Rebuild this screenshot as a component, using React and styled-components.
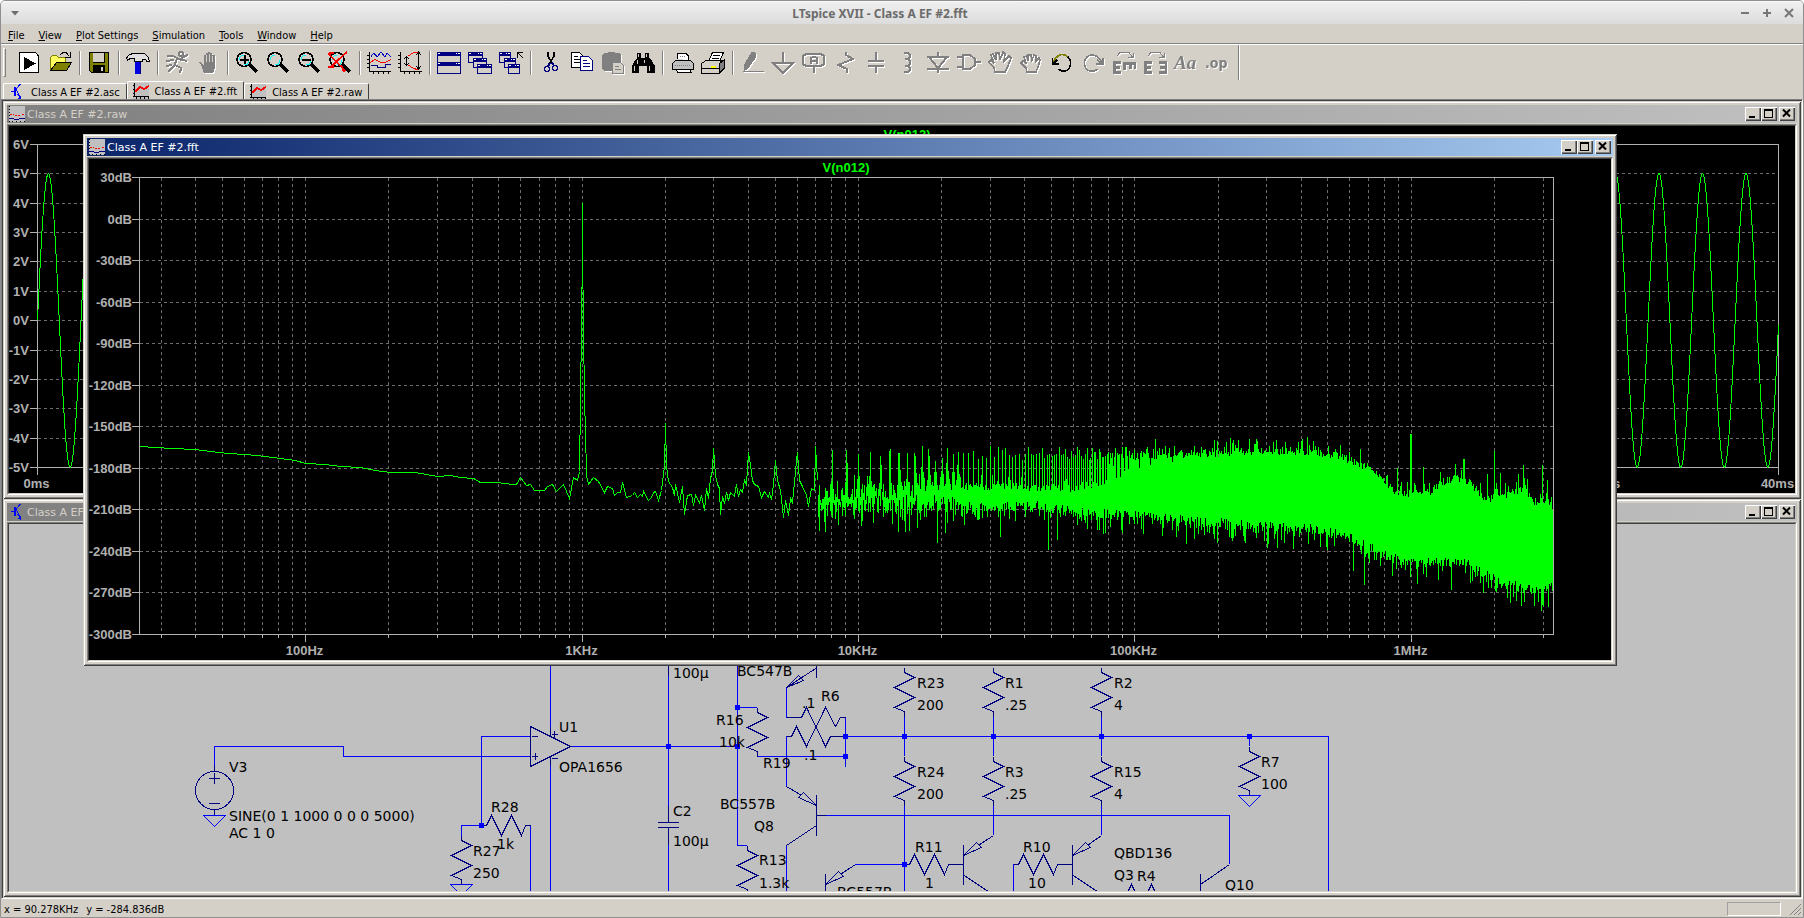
import React from 'react';
import styled, { createGlobalStyle } from 'styled-components';

/* ---------- chart data ---------- */

const makeRandom = (seed) => {
    let s = seed;
    return () => {
        s = (s * 1664525 + 1013904223) % 4294967296;
        return s / 4294967296;
    };
};

const interpolate = (knots, x) => {
    for (let i = 1; i < knots.length; i++) {
        if (x <= knots[i][0]) {
            const [x0, y0] = knots[i - 1];
            const [x1, y1] = knots[i];
            return y0 + ((x - x0) / (x1 - x0)) * (y1 - y0);
        }
    }
    return knots[knots.length - 1][1];
};

const decade = 276.4;
const freqX = (hz) => Math.floor(305.6 + decade * (Math.log10(hz) - 2)) + 0.5;

// low end of the spectrum, where single bins are still visible
const spectrumLine = [
    139, 446, 155, 447, 171, 448, 195, 449, 210, 451, 228, 453, 245, 454, 265, 456, 280, 458, 295, 460, 305, 463,
    325, 464, 340, 466, 360, 467, 375, 470, 390, 472, 415, 472, 437, 476, 450, 475, 460, 477, 473, 478, 480, 482,
    497, 482, 512, 484, 516, 484, 520, 477, 526, 485, 530, 484, 534, 490, 544, 490, 547, 486, 552, 484, 556, 491,
    563, 484, 569, 498, 573, 477, 577, 480, 579, 471, 580, 400, 582, 250, 582, 202, 582, 250, 584, 400, 585, 430,
    586, 475, 588, 484,
    593, 477, 598, 481, 604, 492, 607, 486, 612, 488, 614, 495, 617, 492, 620, 492, 622, 482, 626, 497, 632, 495,
    634, 492, 637, 497, 640, 494, 642, 496, 643, 491, 648, 500, 651, 497, 653, 492, 655, 491, 658, 500, 661, 490,
    664, 465, 665, 423, 666, 465, 668, 481, 672, 487, 674, 495, 675, 484, 679, 502, 682, 486, 684, 514, 687, 495,
    691, 494, 693, 505, 695, 495, 699, 502, 701, 495, 704, 510, 706, 488, 708, 498, 710, 478, 712, 470, 713, 448,
    715, 475, 717, 484, 719, 488, 720, 514, 722, 496, 724, 503, 726, 492, 728, 500, 730, 492, 734, 496, 736, 484,
    738, 496, 740, 489, 742, 492, 744, 480, 746, 484, 748, 452, 750, 464, 752, 480, 754, 484, 758, 486, 761, 497,
    764, 491, 768, 497, 769, 493, 771, 499, 773, 484, 775, 460, 777, 480, 780, 490, 783, 517, 785, 500, 788, 515,
    790, 498, 792, 502, 794, 482, 796, 460, 797, 452, 799, 480, 802, 486, 806, 495, 808, 506, 811, 488, 814, 490,
    815, 446, 817, 480,
];

const topKnots = [
    [818, 496], [860, 492], [900, 490], [940, 487], [1000, 486], [1040, 488], [1070, 488], [1100, 482], [1125, 472],
    [1140, 468], [1155, 466], [1163, 463], [1180, 455], [1210, 453], [1240, 452], [1300, 451], [1340, 456],
    [1360, 464], [1375, 473], [1390, 488], [1400, 494], [1412, 494], [1430, 494], [1440, 483], [1455, 478],
    [1464, 480], [1475, 488], [1484, 498], [1500, 498], [1514, 492], [1525, 489], [1535, 505], [1545, 500], [1554, 508],
];

const bottomKnots = [
    [818, 511], [850, 505], [920, 507], [980, 508], [1040, 507], [1060, 511], [1100, 515], [1130, 515], [1180, 521],
    [1240, 526], [1300, 528], [1340, 535], [1360, 543], [1380, 554], [1400, 562], [1415, 563], [1440, 563],
    [1465, 564], [1480, 573], [1500, 583], [1520, 588], [1540, 591], [1554, 587],
];

const singlePeaks = {
    870: 452, 881: 465, 889: 451, 898: 453, 907: 453, 914: 453, 928: 449, 935: 461,
    1411: 434, 1410: 434, 1423: 467, 1397: 468, 1455: 464, 1463: 459, 1464: 459, 1487: 474, 1494: 451, 1500: 473,
    1518: 474, 1523: 465, 1542: 465, 1547: 480, 1155: 439, 1217: 441, 1328: 446,
};

const singleDips = {
    819: 531, 825: 532, 838: 525, 861: 526, 892: 524, 898: 532, 905: 532, 909: 531, 937: 543, 945: 533, 1000: 537,
    1048: 550, 1057: 540, 1122: 533, 1186: 544, 1232: 541, 1267: 548, 1277: 548, 1293: 549, 1353: 571, 1364: 585,
    1417: 584, 1451: 590, 1510: 603, 1524: 602, 1541: 611, 1548: 607,
};

const buildNoise = () => {
    const random = makeRandom(77);
    const harmonics = {};
    for (let n = 8; n < 150; n++) {
        const x = Math.round(582 + decade * Math.log10(n));
        harmonics[x] = 446 + random() * 14;
    }
    let path = '';
    for (let x = 818; x < 1554; x++) {
        const sparse = x < 930;
        let top = interpolate(topKnots, x) + (random() - 0.5) * (sparse ? 18 : 8);
        let bottom = interpolate(bottomKnots, x) + (random() - 0.6) * (sparse ? 18 : 10);
        if (random() > 0.75) top -= random() * 12;
        if (random() > 0.62) bottom += random() * 17;
        if (x < 1170 && harmonics[x]) top = Math.min(top, harmonics[x]);
        else if (x < 960 && (harmonics[x + 1] || harmonics[x - 1])) {
            top -= 14;
            bottom -= 8;
        }
        if (singlePeaks[x]) top = singlePeaks[x];
        if (singleDips[x]) bottom = singleDips[x];
        path += `M${x + 0.5} ${Math.round(top)}V${Math.round(Math.max(bottom, top + 5))}`;
    }
    return path;
};

const noisePath = buildNoise();

const buildSine = () => {
    let path = '';
    for (let i = 0; i <= 1741 * 2; i++) {
        const x = i / 2;
        const y = 320.5 - 146.8 * Math.sin((x / 43.53) * 2 * Math.PI);
        path += `${i ? 'L' : 'M'}${37.5 + x} ${y.toFixed(1)}`;
    }
    return path;
};

const sinePath = buildSine();

const fftRows = [30, 0, -30, -60, -90, -120, -150, -180, -210, -240, -270, -300].map((db, i) => ({
    label: `${db}dB`,
    y: Math.round(177 + (i * 457) / 11) + 0.5,
}));

const fftColumns = [];
[10, 100, 1000, 10000, 100000, 1000000].forEach((base) => {
    for (let m = 1; m < 10; m++) {
        const hz = base * m;
        if (hz > 25 && hz < 3260000) fftColumns.push({ x: freqX(hz), major: m === 1 });
    }
});

const fftLabels = [
    { hz: 100, label: '100Hz' },
    { hz: 1000, label: '1KHz' },
    { hz: 10000, label: '10KHz' },
    { hz: 100000, label: '100KHz' },
    { hz: 1000000, label: '1MHz' },
];

const voltRows = [6, 5, 4, 3, 2, 1, 0, -1, -2, -3, -4, -5].map((v, i) => ({
    label: `${v}V`,
    y: Math.round(144 + (i * 323) / 11) + 0.5,
}));

const timeColumns = [0, 4, 8, 12, 16, 20, 24, 28, 32, 36, 40].map((ms) => ({
    label: `${ms}ms`,
    x: Math.round(37 + (ms * 1741) / 40) + 0.5,
}));

/* ---------- plots ---------- */

function FftPlot() {
    return (
        <PlotSvg width="1522" height="501" viewBox="89 159 1522 501" role="img" aria-label="FFT of V(n012)">
            <GridLines>
                {fftRows.slice(1, -1).map((row) => <path key={row.label} d={`M140 ${row.y}H1553`} />)}
                {fftColumns.map((col) => <path key={col.x} d={`M${col.x} 178V634`} />)}
            </GridLines>
            <Trace points={spectrumLine.map((v) => v + 0.5).join(' ')} />
            <NoiseTrace d={noisePath} />
            <AxisLines>
                <path d="M139.5 177V635M1553.5 177V635M139 177.5H1554M139 634.5H1554" />
                {fftRows.map((row) => <path key={row.label} d={`M132 ${row.y}H139`} />)}
                {fftColumns.map((col) => <path key={col.x} d={`M${col.x} 634V${col.major ? 642 : 638}`} />)}
            </AxisLines>
            {fftRows.map((row) => <AxisText key={row.label} x="132" y={row.y + 4.5} textAnchor="end">{row.label}</AxisText>)}
            {fftLabels.map((item) => <AxisText key={item.label} x={freqX(item.hz) - 1} y="655" textAnchor="middle">{item.label}</AxisText>)}
            <TraceText x="846" y="172" textAnchor="middle">V(n012)</TraceText>
        </PlotSvg>
    );
}

function RawPlot() {
    return (
        <PlotSvg width="1786" height="367" viewBox="9 126 1786 367" role="img" aria-label="Waveform of V(n012)">
            <GridLines>
                {voltRows.slice(1, -1).map((row) => <path key={row.label} d={`M38 ${row.y}H1778`} />)}
                {timeColumns.slice(1, -1).map((col) => <path key={col.label} d={`M${col.x} 145V467`} />)}
            </GridLines>
            <AxisLines>
                <path d="M37.5 144V475M1778.5 144V475M37 144.5H1779M37 467.5H1779" />
                {voltRows.map((row) => <path key={row.label} d={`M30 ${row.y}H37`} />)}
            </AxisLines>
            <SineTrace d={sinePath} />
            {voltRows.map((row) => <AxisText key={row.label} x="29" y={row.y + 4.5} textAnchor="end">{row.label}</AxisText>)}
            {timeColumns.map((col) => <AxisText key={col.label} x={col.x - 1} y="488" textAnchor="middle">{col.label}</AxisText>)}
            <TraceText x="907" y="139" textAnchor="middle">V(n012)</TraceText>
        </PlotSvg>
    );
}

/* ---------- schematic ---------- */

const ResistorV = ({ x, y }) => (
    <Part d={`M${x} ${y}v5l10 5l-20 10l20 10l-20 10l10 4v5`} />
);

const ResistorH = ({ x, y }) => (
    <Part d={`M${x} ${y}h5l5 -10l10 20l10 -20l10 20l4 -10h5`} />
);

const Ground = ({ x, y }) => <Wire d={`M${x - 11} ${y}h22l-11 11z`} />;

const wires = [
    'M214.5 767V746.5H343.5V756.5H530',
    'M530 736.5H481.5V825.5H461.5V840',
    'M530.5 825V891',
    'M550.5 666V727M550.5 766V891',
    'M570 746.5H737',
    'M668.5 676V806M668.5 845V891',
    'M737.5 666V845.5H747',
    'M737 707.5H756.5',
    'M756.5 756.5H845.5M845.5 717V767',
    'M786.5 687V717.5M786.5 736V787M786.5 845V891',
    'M845.5 736.5H1328.5V891',
    'M825 815.5H1229.5V864',
    'M855 864.5H904.5',
    'M904.5 717V756M904.5 805V891',
    'M993.5 717V756M993.5 805V835',
    'M1101.5 717V756M1101.5 805V835',
    'M1249.5 736V746',
    'M1018 864.5H1013.5V891',
];

const parts = [
    'M214.5 766V771M214.5 809V815M209 778.5H220M214.5 773V784M209 803.5H220',
    'M530.5 726.5V766.5L570.5 746.5Z',
    'M550.5 727V736M550.5 757V766',
    'M532 736.5H538M532 756.5H538M535.5 753V760M552 734.5H558M554.5 731V738M552 758.5H558',
    'M668.5 666V676M668.5 806V822M658 822.5H679M658 827.5H679M668.5 827V845',
    'M816.5 666V678M816.5 668L786.5 687.5L798.5 675.5L803.5 680.5L786.5 687.5',
    'M786.5 786.5L801 795M816.5 805.5L798.5 797.5L803.5 792.5ZM816.5 795V836M816 815.5H826M816.5 825.5L786.5 845.5',
    'M825.5 874V891M855.5 864.5L841 874M825.5 884.5L838.5 871.5L843.5 876.5Z',
    'M949 864.5H963M963.5 845V885M993.5 835.5L979 845M963.5 855.5L976.5 842.5L981.5 847.5ZM963.5 875L989 892',
    'M1062 864.5H1072M1072.5 845V885M1101.5 835.5L1088 845M1072.5 855.5L1085.5 842.5L1090.5 847.5ZM1072.5 875L1098 892',
    'M1200.5 874V891M1229.5 864.5L1200.5 884.5',
    'M786.5 717.5H801.5L806.5 707.5L825.5 746.5L830.5 736.5H846',
    'M786.5 736.5H791.5L796.5 726.5L806.5 746.5L825.5 707.5L835.5 726.5L840.5 717.5H846',
];

const nodes = [
    [481, 825], [668, 746], [737, 746], [737, 707], [845, 736], [845, 756],
    [904, 736], [904, 864], [993, 736], [1101, 736], [1249, 736],
];

const labels = [
    [229, 772, 'V3'], [229, 821, 'SINE(0 1 1000 0 0 0 5000)'], [229, 838, 'AC 1 0'],
    [491, 812, 'R28'], [497, 849, '1k'], [473, 856, 'R27'], [473, 878, '250'],
    [559, 732, 'U1'], [559, 772, 'OPA1656'], [673, 678, '100µ'], [673, 816, 'C2'], [673, 846, '100µ'],
    [716, 725, 'R16'], [719, 747, '10k'], [763, 768, 'R19'], [737, 676, 'BC547B'], [720, 809, 'BC557B'],
    [754, 831, 'Q8'], [759, 865, 'R13'], [759, 888, '1.3k'], [821, 701, 'R6'], [802, 708, '.1'], [804, 760, '.1'],
    [917, 688, 'R23'], [917, 710, '200'], [917, 777, 'R24'], [917, 799, '200'],
    [1005, 688, 'R1'], [1005, 710, '.25'], [1005, 777, 'R3'], [1005, 799, '.25'],
    [1114, 688, 'R2'], [1114, 710, '4'], [1114, 777, 'R15'], [1114, 799, '4'],
    [1261, 767, 'R7'], [1261, 789, '100'], [915, 852, 'R11'], [925, 888, '1'], [1023, 852, 'R10'], [1028, 888, '10'],
    [1114, 858, 'QBD136'], [1114, 880, 'Q3'], [1137, 881, 'R4'], [1225, 890, 'Q10'], [837, 897, 'BC557B'],
];

function Schematic() {
    return (
        <SchematicSvg width="1786" height="367" viewBox="9 524 1786 367" role="img" aria-label="Class A EF #2 schematic">
            {wires.map((d) => <Wire key={d} d={d} />)}
            {parts.map((d) => <Part key={d} d={d} />)}
            <PartCircle cx="214.5" cy="790.5" r="19" />
            <Ground x={214.5} y={815.5} />
            <Ground x={461.5} y={884.5} />
            <Ground x={1249.5} y={795.5} />
            <ResistorV x={461.5} y={835.5} />
            <ResistorV x={747.5} y={845.5} />
            <ResistorV x={757.5} y={707.5} />
            <ResistorV x={904.5} y={667.5} />
            <ResistorV x={904.5} y={756.5} />
            <ResistorV x={993.5} y={667.5} />
            <ResistorV x={993.5} y={756.5} />
            <ResistorV x={1101.5} y={667.5} />
            <ResistorV x={1101.5} y={756.5} />
            <ResistorV x={1249.5} y={746.5} />
            <ResistorH x={481.5} y={825.5} />
            <ResistorH x={904.5} y={864.5} />
            <ResistorH x={1013.5} y={864.5} />
            <ResistorH x={1121.5} y={894.5} />
            {nodes.map(([x, y]) => <NodeDot key={`${x}-${y}`} x={x - 2} y={y - 2} width="5" height="5" />)}
            {labels.map(([x, y, text]) => <PartText key={`${x}-${y}`} x={x} y={y}>{text}</PartText>)}
        </SchematicSvg>
    );
}

/* ---------- toolbar icons ---------- */

const magnifier = (
    <>
        <path d="M14 13L22 21" stroke="#000" strokeWidth="4" />
        <circle cx="9" cy="8.500" r="7" fill="#d4d0c8" stroke="#000" strokeWidth="1.600" />
        <path d="M4 9C4 6 6 4 9 4M9 14C12 14 14 12 14 9" stroke="#0ff" fill="none" />
    </>
);

const miniWindow = (x, y, w, h) => (
    <>
        <rect x={x + 0.5} y={y + 0.5} width={w - 1} height={h - 1} fill="#d4d0c8" stroke="#000080" />
        <rect x={x} y={y} width={w} height="4" fill="#000080" />
        <path d={`M${x + 1} ${y + 1.5}h2M${x + w - 5} ${y + 1.5}h1M${x + w - 3} ${y + 1.5}h2`} stroke="#fff" />
    </>
);

const icons = {
    run: (
        <>
            <path d="M2.500 1.500H18.500L21.500 5V21.500H2.500Z" fill="#fff" stroke="#000" />
            <path d="M7 6V19L19 12.500Z" fill="#000" />
        </>
    ),
    open: (
        <>
            <path d="M2.500 19.500V6.500L4.500 4.500H8.500L10.500 6.500H17.500V12H8Z" fill="#ffff60" stroke="#808000" />
            <path d="M2.500 19.500L8.500 11.500H23.500L18.500 19.500Z" fill="#808000" stroke="#000" />
            <path d="M12.500 3.500L15 1.500H18L21.500 5.500M22.500 1V6.500H17" stroke="#000" fill="none" />
        </>
    ),
    save: (
        <>
            <path d="M2 1H22V22H4L2 20Z" fill="#000" />
            <path d="M3 2H6V12H18V2H21V21H18V14H6V21H4L3 20Z" fill="#808000" />
            <path d="M6 2H17V11H6Z" fill="#d4d0c8" />
            <path d="M14 16H16V20H14Z" fill="#d4d0c8" />
        </>
    ),
    hammer: (
        <>
            <path d="M9 11H15V23H9Z" fill="#0000e0" />
            <path d="M14.500 11V23" stroke="#000080" />
            <path d="M.5 7L3 4L8 2H18L20 4L22 6L23.500 10.500H21L19 8H16V10.500H8V7H5L1.500 9.500Z" fill="#e0e0e0" stroke="#000" />
        </>
    ),
    halt: <path d="M14 3a2 2 0 1 0 4 0a2 2 0 1 0-4 0M2 5H8L14 8L22 10M12 8L9 15L3 21M10 14L16 17L15 22M15 9L20 5L23 4M1 10L9 9M1 15L7 14" stroke="#808080" strokeWidth="2" fill="none" />,
    hand: (
        <>
            <path d="M5 14L2 11H5L8 15V4H10V2H12V1H14V2H16V4H19V17L17 22H8Z" fill="#808080" />
            <path d="M10.500 4V11M13.500 3V11M16.500 5V11" stroke="#d4d0c8" />
        </>
    ),
    zoomIn: <>{magnifier}<path d="M5 8.500H14M9.500 4V13" stroke="#000" strokeWidth="2" /></>,
    zoom: magnifier,
    zoomOut: <>{magnifier}<path d="M5 8.500H14" stroke="#000" strokeWidth="2" /></>,
    zoomFit: <>{magnifier}<path d="M0 2L17 20M19 1L10 9L2 17M0 16H6M13 14L16 21M1 2H6" stroke="#f00" strokeWidth="1.600" fill="none" /></>,
    plot: (
        <>
            <path d="M2.500 1V20.500H24M0 4.500H2M0 8.500H2M0 12.500H2M0 16.500H2M6.500 20V23M11.500 20V23M16.500 20V23M21.500 20V23" stroke="#000" fill="none" />
            <path d="M4 5.500L7 2L10 6L14 1L18 6L20 2L24 6" stroke="#0000c0" fill="none" />
            <path d="M3 11.500L8 8.500L14 11.500H18L24 8.500" stroke="#f00" fill="none" />
            <path d="M4 14.500H10V16.500H18V13.500H24" stroke="#000080" fill="none" />
        </>
    ),
    autorange: (
        <>
            <path d="M2.500 1V20.500H24M0 4.500H2M0 8.500H2M0 12.500H2M0 16.500H2M6.500 20V23M11.500 20V23M16.500 20V23M21.500 20V23" stroke="#000" fill="none" />
            <path d="M20.500 1V18M18 4L20.500 1L23 4M18 15L20.500 18L23 15M8.500 6V14M6 8L8.500 6L11 8M6 12L8.500 14L11 12" stroke="#000" fill="none" />
            <path d="M10 5L15 2L20 1M10 14L15 17L20 19" stroke="#f00" fill="none" />
        </>
    ),
    tile: <>{miniWindow(0, 1, 24, 11)}{miniWindow(0, 11, 24, 12)}</>,
    cascade: <>{miniWindow(0, 1, 15, 11)}{miniWindow(5, 7, 14, 10)}{miniWindow(9, 13, 15, 10)}</>,
    closeAll: <>{miniWindow(0, 1, 12, 11)}{miniWindow(5, 7, 12, 10)}{miniWindow(9, 13, 12, 10)}<path d="M18.500 7V1.500H24M19 2L24 7" stroke="#000" fill="none" /></>,
    cut: (
        <>
            <path d="M10 1V5L14 12M16 1V5L12 12" stroke="#000" strokeWidth="1.600" fill="none" />
            <path d="M12 12L10 15M14 12L16 14" stroke="#000080" strokeWidth="2" />
            <circle cx="9" cy="18" r="2.500" fill="none" stroke="#000080" strokeWidth="1.600" />
            <circle cx="17" cy="17" r="2.500" fill="none" stroke="#000080" strokeWidth="1.600" />
        </>
    ),
    copy: (
        <>
            <path d="M2.500 1.500H10.500L14.500 5.500V16.500H2.500Z" fill="#fff" stroke="#000" />
            <path d="M5 5.500H9M5 8.500H11M5 11.500H11" stroke="#000" />
            <path d="M11.500 5.500H19.500L23.500 9.500V19.500H11.500Z" fill="#fff" stroke="#000080" />
            <path d="M14 9.500H18M14 12.500H21M14 15.500H21" stroke="#000080" />
        </>
    ),
    paste: (
        <>
            <path d="M2 4L4 2H8V1H15V2H19L21 4V20H4L2 18Z" fill="#808080" />
            <path d="M12.500 11.500H20.500L23.500 14.500V22.500H12.500Z" fill="#d4d0c8" stroke="#808080" />
            <path d="M15 15.500H19M15 18.500H21" stroke="#808080" />
        </>
    ),
    find: (
        <>
            <path d="M6 2H10V7H14V2H18V7L21 10L24 15V22H16V15H8V22H1V15L4 9L6 7Z" fill="#000" />
            <path d="M7.500 3V6M15.500 3V6M6.500 9V13M3.500 15V20M18.500 15V20M13.500 9V12" stroke="#d4d0c8" />
        </>
    ),
    print: (
        <>
            <path d="M7.500 8V2.500H16L18.500 5V9" fill="#fff" stroke="#000" />
            <path d="M5.500 9.500H20.500L23.500 12.500V18.500H2.500V12.500Z" fill="#c0c0c0" stroke="#000" />
            <path d="M6.500 18.500H19.500L21.500 21.500H7.500Z" fill="#fff" stroke="#000" />
            <path d="M10 5.500H15M5 14.500H21" stroke="#808080" strokeDasharray="1 1" />
        </>
    ),
    printSetup: (
        <>
            <path d="M7.500 10L11.500 1.500H22.500L18.500 10" fill="#fff" stroke="#000" />
            <path d="M12 4.500H19M11 7.500H18" stroke="#000" />
            <path d="M18.500 12.500L23.500 8.500V17L18.500 22" fill="#808080" stroke="#000" />
            <path d="M.5 12.500L5 9.500H21L18.500 12.500V22.500H.5Z" fill="#d4d0c8" stroke="#000" />
            <path d="M1 17.500H18" stroke="#000" />
            <path d="M10 15.500H15" stroke="#ff0" strokeWidth="2" />
        </>
    ),
    pencil: <path d="M12 1L15 2V7L8 17L4 20L5 13ZM4 20.500H24" fill="#808080" stroke="#808080" />,
    ground: <path d="M11.500 1V11M1 11.500H23L12 22Z" stroke="#808080" strokeWidth="2" fill="none" />,
    label: <path d="M4 3H19L22 5V13L19 15H4L1 13V5ZM9 13V7L11 6H13L15 7V13M9 10H15M12 15V22" stroke="#808080" strokeWidth="2" fill="none" />,
    resistor: <path d="M13 1V4L20 8L5 14L14 18V22" stroke="#808080" strokeWidth="2" fill="none" />,
    capacitor: <path d="M12 1V9M4 10H20M4 15H20M12 15V22" stroke="#808080" strokeWidth="2" fill="none" />,
    inductor: <path d="M9 2H13L15 4V6L13 8H10M13 8L15 10V13L13 15H10M13 15L15 17V19L13 21H9" stroke="#808080" strokeWidth="2" fill="none" />,
    diode: <path d="M12 1V6M1 6H23M3 6L12 17L21 6M1 18H23M12 18V22" stroke="#808080" strokeWidth="2" fill="none" />,
    gate: <path d="M0 6H5M0 16H5M6 4H13L18 8V14L13 18H6ZM18 11H24" stroke="#808080" strokeWidth="2" fill="none" />,
    move: <path d="M7 21L6 17L1 11L3 9L6 12L3 4L5 3L8 9V2H11L12 9L15 1L17 3L16 10L21 5L23 7L20 15L17 21Z" stroke="#808080" strokeWidth="1.600" fill="none" />,
    drag: <path d="M8 21L7 17L2 12L4 10L7 12L5 6L8 5L9 10V4H12L13 9L15 4L17 5V10L20 7L21 9L19 16L17 21Z" stroke="#808080" strokeWidth="1.600" fill="none" />,
    undo: (
        <>
            <path d="M3 12C6 4 13 1 18 6" stroke="#808000" strokeWidth="1.600" fill="none" />
            <path d="M18 6C23 11 20 19 15 20C12 20.500 10 20 9 18M2.500 7V13H9M3 13L7 9" stroke="#000" strokeWidth="1.600" fill="none" />
        </>
    ),
    redo: <path d="M21 13C19 4 10 2 6 6C1 11 4 19 9 20C12 20.500 15 20 16 18M22 7V13H15M20 12L16 9" stroke="#808080" strokeWidth="1.600" fill="none" />,
    rotate: (
        <>
            <path d="M9 11H2V21H9M2 16H8M12 19V12H24M18 12V18M23 12V18" stroke="#808080" strokeWidth="3" fill="none" />
            <path d="M4.500 5.500L8 1.500H17L20.500 6M16 6.500H21.500V2" stroke="#808080" fill="none" />
        </>
    ),
    mirror: (
        <>
            <path d="M9 11H2V21H9M2 16H8M16 11H23V21H16M17 16H23" stroke="#808080" strokeWidth="3" fill="none" />
            <path d="M4.500 5.500L8 1.500H17L20.500 6M16 6.500H21.500V2" stroke="#808080" fill="none" />
        </>
    ),
};

const toolGroups = [
    [['run', 'Run'], ['open', 'Open']],
    [['save', 'Save']],
    [['hammer', 'Control Panel']],
    [['halt', 'Run simulation', true], ['hand', 'Halt', true]],
    [['zoomIn', 'Zoom in'], ['zoom', 'Pan'], ['zoomOut', 'Zoom out'], ['zoomFit', 'Zoom full extents']],
    [['plot', 'Pick visible traces'], ['autorange', 'Autorange']],
    [['tile', 'Tile windows'], ['cascade', 'Cascade windows'], ['closeAll', 'Close windows']],
    [['cut', 'Cut'], ['copy', 'Copy'], ['paste', 'Paste', true], ['find', 'Find']],
    [['print', 'Print'], ['printSetup', 'Print setup']],
    [
        ['pencil', 'Wire', true], ['ground', 'Ground', true], ['label', 'Label net', true], ['resistor', 'Resistor', true],
        ['capacitor', 'Capacitor', true], ['inductor', 'Inductor', true], ['diode', 'Diode', true],
        ['gate', 'Component', true], ['move', 'Move', true], ['drag', 'Drag', true], ['undo', 'Undo'],
        ['redo', 'Redo', true], ['rotate', 'Rotate', true], ['mirror', 'Mirror', true], ['text', 'Text', true],
        ['directive', 'SPICE directive', true],
    ],
];

const menuItems = ['File', 'View', 'Plot Settings', 'Simulation', 'Tools', 'Window', 'Help'];

const SchematicIcon = () => (
    <svg width="16" height="16" shapeRendering="crispEdges">
        <path d="M2 7.500H6M11.500 0L7 5L12 15.500M8 10L12 14" stroke="#00f" fill="none" />
        <path d="M6 3V12" stroke="#00f" strokeWidth="2" />
        <path d="M12 15V11L8 15Z" fill="#00f" />
    </svg>
);

const WaveIcon = () => (
    <svg width="16" height="16" shapeRendering="crispEdges">
        <rect width="16" height="16" fill="#c0c0c0" />
        <path d="M1.500 0V13M0 2.500H2M0 6.500H2M0 10.500H2" stroke="#000" />
        <path d="M0 13.500H16M3.500 13V16M7.500 13V16M11.500 13V16M15.500 13V16" stroke="#000" />
        <path d="M2 9L7 4L11 6L16 3" stroke="#f00" strokeWidth="2" fill="none" />
    </svg>
);

const CaptionIcon = () => (
    <svg width="16" height="16" shapeRendering="crispEdges">
        <rect width="16" height="16" fill="#c0c0c0" />
        <path d="M.5 0V16" stroke="#000" strokeDasharray="1 2" />
        <path d="M1 8.500H5M6 9.500H12M13 8.500H16" stroke="#f00" strokeDasharray="2 1" />
        <path d="M0 12.500H5M5 13.500H10M10 12.500H16" stroke="#000080" />
        <path d="M3 15.500H16" stroke="#000" strokeDasharray="1 3" />
    </svg>
);

/* ---------- windows ---------- */

function MdiWindow({ title, icon, active, dark, children }) {
    return (
        <Frame>
            <Caption $active={active}>
                {icon}
                <CaptionText $active={active}>{title}</CaptionText>
                <CaptionButton aria-label="Minimize">
                    <svg width="12" height="10" shapeRendering="crispEdges"><path d="M3 9H9" stroke="#000" strokeWidth="2" /></svg>
                </CaptionButton>
                <CaptionButton aria-label="Maximize">
                    <svg width="12" height="10" shapeRendering="crispEdges"><path d="M2.500 1.500H10.500V9.500H2.500ZM2 2.500H11" stroke="#000" fill="none" /></svg>
                </CaptionButton>
                <CloseButton aria-label="Close">
                    <svg width="12" height="10"><path d="M3 1.500L10 8.500M10 1.500L3 8.500" stroke="#000" strokeWidth="2" /></svg>
                </CloseButton>
            </Caption>
            <Client $dark={dark}>{children}</Client>
        </Frame>
    );
}

function Tool({ name, title, disabled }) {
    return (
        <ToolButton title={title} aria-label={title} disabled={disabled}>
            {name === 'text' && <ToolScript>Aa</ToolScript>}
            {name === 'directive' && <ToolMono>.op</ToolMono>}
            {icons[name] && <ToolIcon viewBox="0 0 24 24">{icons[name]}</ToolIcon>}
        </ToolButton>
    );
}

export default function App() {
    return (
        <Shell>
            <GlobalStyle />
            <TitleBar>
                <TitleButton aria-label="Window menu">
                    <svg width="10" height="6"><path d="M1 1H9L5 5.500Z" fill="#6e6e6e" /></svg>
                </TitleButton>
                <TitleText>LTspice XVII - Class A EF #2.fft</TitleText>
                <TitleButton aria-label="Minimize">
                    <svg width="10" height="10"><path d="M1 5H9" stroke="#777" strokeWidth="2" /></svg>
                </TitleButton>
                <TitleButton aria-label="Maximize">
                    <svg width="10" height="10"><path d="M1 5H9M5 1V9" stroke="#777" strokeWidth="2" /></svg>
                </TitleButton>
                <TitleButton aria-label="Close">
                    <svg width="10" height="10"><path d="M1 1L9 9M9 1L1 9" stroke="#777" strokeWidth="2" /></svg>
                </TitleButton>
            </TitleBar>
            <MenuBar>
                {menuItems.map((item) => (
                    <MenuButton key={item}><u>{item[0]}</u>{item.slice(1)}</MenuButton>
                ))}
            </MenuBar>
            <Toolbar>
                <Grip />
                {toolGroups.map((group, i) => (
                    <React.Fragment key={group[0][0]}>
                        {i > 0 && <Separator />}
                        {group.map(([name, title, disabled]) => (
                            <Tool key={name} name={name} title={title} disabled={disabled} />
                        ))}
                    </React.Fragment>
                ))}
                <ToolbarEnd />
            </Toolbar>
            <Tabs>
                <Tab><SchematicIcon />Class A EF #2.asc</Tab>
                <Tab $active><WaveIcon />Class A EF #2.fft</Tab>
                <Tab><WaveIcon />Class A EF #2.raw</Tab>
            </Tabs>
            <Desktop>
                <MdiWindow title="Class A EF #2.raw" icon={<CaptionIcon />} dark><RawPlot /></MdiWindow>
                <MdiWindow title="Class A EF #2.asc" icon={<SchematicIcon />}><Schematic /></MdiWindow>
                <Floating>
                    <MdiWindow title="Class A EF #2.fft" icon={<CaptionIcon />} active dark><FftPlot /></MdiWindow>
                </Floating>
            </Desktop>
            <StatusBar>
                <span>x = 90.278KHz</span>
                <span>y = -284.836dB</span>
                <StatusPane />
                <svg width="12" height="12"><path d="M1 12L12 1M5 12L12 5M9 12L12 9" stroke="#808080" /></svg>
            </StatusBar>
        </Shell>
    );
}

/* ---------- styles ---------- */

const GlobalStyle = createGlobalStyle`
    * {
        box-sizing: border-box;
    }
    body {
        margin: 0;
        background: #fff;
        font-family: "DejaVu Sans Condensed", "DejaVu Sans", sans-serif;
        font-size: 11px;
        color: #000;
    }
    button {
        margin: 0;
        padding: 0;
        border: 0;
        background: none;
        color: inherit;
        font: inherit;
    }
    svg {
        display: block;
        flex: none;
    }
`;

const Shell = styled.div`
    display: flex;
    flex-direction: column;
    min-height: 100vh;
    border: 1px solid #8f8f8f;
    border-radius: 5px 5px 0 0;
    background: #d4d0c8;
    overflow: hidden;
`;

const TitleBar = styled.header`
    display: flex;
    align-items: center;
    height: 23px;
    padding: 0 3px;
    border-top: 1px solid #fafafa;
    background: linear-gradient(#efefef, #dcdcdc);
`;

const TitleButton = styled.button`
    display: flex;
    align-items: center;
    justify-content: center;
    width: 22px;
    height: 20px;
`;

const TitleText = styled.h1`
    flex: 1;
    margin: 0;
    padding-top: 2px;
    font: bold 12px/20px "Noto Sans", sans-serif;
    text-align: center;
    color: #6b6b6b;
`;

const MenuBar = styled.nav`
    display: flex;
    gap: 14px;
    height: 21px;
    padding-left: 7px;
    border-bottom: 1px solid #fff;
    box-shadow: inset 0 -1px #808080;
`;

const MenuButton = styled.button`
    height: 21px;
    padding-top: 2px;
    line-height: 19px;
`;

const Toolbar = styled.div`
    display: flex;
    align-items: center;
    height: 35px;
    padding-left: 2px;
`;

const Grip = styled.span`
    width: 3px;
    height: 29px;
    margin-right: 8px;
    border: 1px solid #808080;
    border-top-color: #fff;
    border-left-color: #fff;
`;

const ToolButton = styled.button`
    display: flex;
    align-items: center;
    width: 31px;
    height: 30px;
    padding-left: 3px;
    color: #808080;

    &:disabled {
        filter: drop-shadow(1px 1px 0 #fff);
    }
`;

const ToolIcon = styled.svg`
    width: 24px;
    height: 24px;
    shape-rendering: crispEdges;
`;

const ToolScript = styled.span`
    font: italic bold 19px/24px "Liberation Serif", serif;
`;

const ToolMono = styled.span`
    font: bold 14px/24px "DejaVu Sans Condensed", sans-serif;
`;

const Separator = styled.span`
    width: 2px;
    height: 24px;
    margin: 0 3px;
    background: linear-gradient(90deg, #808080 50%, #fff 50%);
`;

const ToolbarEnd = styled.span`
    width: 2px;
    height: 35px;
    margin-left: 5px;
    background: linear-gradient(90deg, #808080 50%, #fff 50%);
`;

const Tabs = styled.div`
    display: flex;
    align-items: flex-end;
    height: 19px;
    padding-left: 2px;
`;

const Tab = styled.button`
    display: flex;
    align-items: center;
    gap: 6px;
    height: ${(props) => (props.$active ? 18 : 16)}px;
    padding: 1px 6px 0 5px;
    border-left: 1px solid #fff;
    border-top: 1px solid #fff;
    border-right: 1px solid #404040;
    border-radius: 2px 2px 0 0;
`;

const Desktop = styled.main`
    position: relative;
    display: flex;
    flex-direction: column;
    flex: 1;
    border: 1px solid;
    border-color: #808080 #fff #fff #808080;
    box-shadow: inset 1px 1px #404040, inset -1px -1px #d4d0c8;
    padding: 1px;
    background: #808080;
`;

// window opened on top of the tiled ones
const Floating = styled.div`
    position: absolute;
    left: 81px;
    top: 34px;
`;

const Frame = styled.section`
    display: flex;
    flex-direction: column;
    flex: 1;
    padding: 4px;
    background: #d4d0c8;
    box-shadow: inset 1px 1px #d4d0c8, inset -1px -1px #404040, inset 2px 2px #fff, inset -2px -2px #808080;
`;

const Caption = styled.header`
    display: flex;
    align-items: center;
    height: 18px;
    margin-bottom: 1px;
    padding: 0 2px;
    background: ${(props) => (props.$active
        ? 'linear-gradient(90deg, #0a246a, #a6caf0)'
        : 'linear-gradient(90deg, #808080, #c0c0c0)')};
`;

const CaptionText = styled.h2`
    flex: 1;
    margin: 0 0 0 2px;
    padding-top: 2px;
    font: 11px/16px "DejaVu Sans", sans-serif;
    color: ${(props) => (props.$active ? '#fff' : '#d4d0c8')};
`;

const CaptionButton = styled.button`
    display: flex;
    width: 16px;
    height: 14px;
    padding: 1px;
    background: #d4d0c8;
    box-shadow: inset 1px 1px #fff, inset -1px -1px #404040, inset -2px -2px #808080;
`;

const CloseButton = styled(CaptionButton)`
    margin-left: 2px;
`;

const Client = styled.div`
    flex: 1;
    overflow: hidden;
    border: 1px solid;
    border-color: #808080 #fff #fff #808080;
    background: ${(props) => (props.$dark ? '#000' : '#c0c0c0')};

    > svg {
        border: 1px solid;
        border-color: #404040 #d4d0c8 #d4d0c8 #404040;
        box-sizing: content-box;
    }
`;

const PlotSvg = styled.svg`
    shape-rendering: crispEdges;
`;

const SchematicSvg = styled(PlotSvg)``;

const GridLines = styled.g`
    stroke: #6c6c6c;
    stroke-dasharray: 3 3;
`;

const AxisLines = styled.g`
    stroke: #b0b0b0;
`;

const AxisText = styled.text`
    font: bold 13px "Liberation Sans", sans-serif;
    fill: #b0b0b0;
`;

const TraceText = styled(AxisText)`
    fill: #00ff00;
`;

const Trace = styled.polyline`
    fill: none;
    stroke: #00ff00;
`;

const SineTrace = styled.path`
    fill: none;
    stroke: #00ff00;
`;

const NoiseTrace = styled(SineTrace)``;

const Wire = styled.path`
    fill: none;
    stroke: #0000ff;
`;

const Part = styled(Wire)`
    stroke: #000080;
`;

const PartCircle = styled.circle`
    fill: none;
    stroke: #000080;
`;

const NodeDot = styled.rect`
    fill: #0000ff;
`;

const PartText = styled.text`
    font: 14px "DejaVu Sans", sans-serif;
    fill: #000;
`;

const StatusBar = styled.footer`
    display: flex;
    align-items: center;
    gap: 8px;
    height: 18px;
    padding: 2px 2px 0 3px;
`;

const StatusPane = styled.span`
    width: 54px;
    height: 14px;
    margin-left: auto;
    border: 1px solid;
    border-color: #a0a0a0 #fff #fff #a0a0a0;
`;
